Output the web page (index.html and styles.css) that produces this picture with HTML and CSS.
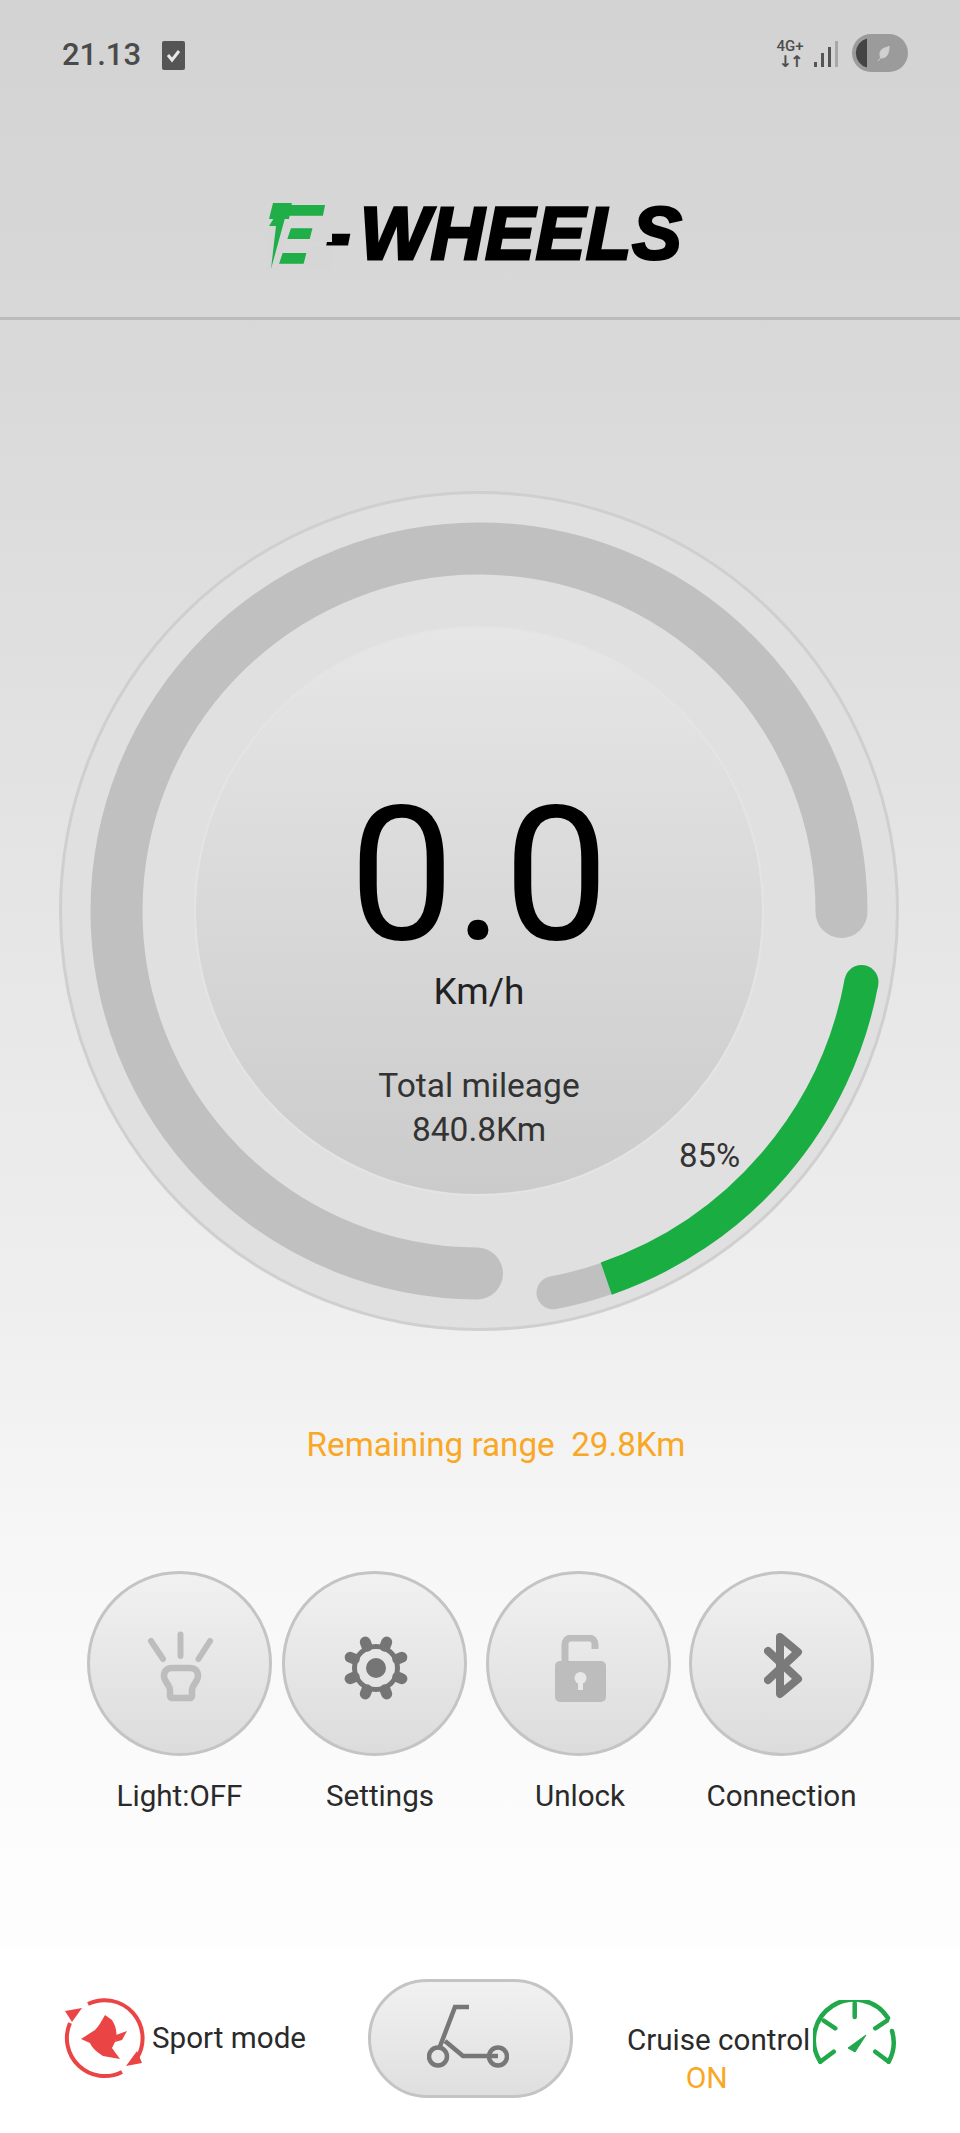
FILE: index.html
```html
<!DOCTYPE html>
<html lang="en">
<head>
<meta charset="utf-8">
<title>E-Wheels</title>
<link rel="stylesheet" href="styles.css">
</head>
<body>
<div class="app">
  <header class="top">
    <div class="status">
      <div class="status-left">
        <span class="clock">21.13</span>
        <svg class="check" viewBox="0 0 23 29"><rect width="23" height="29" rx="2" fill="#555"/><path d="M6 14l4 5 7-9" fill="none" stroke="#e8e8e8" stroke-width="3"/></svg>
      </div>
      <div class="status-right">
        <div class="net"><span class="net-type">4G+</span><span class="net-arrows">↓↑</span></div>
        <svg class="signal" viewBox="0 0 26 26"><rect x="0" y="21" width="3" height="5" fill="#555"/><rect x="7" y="12" width="3" height="14" fill="#555"/><rect x="14" y="6" width="3" height="20" fill="#555"/><rect x="21" y="0" width="3" height="26" fill="#a8a8a8"/></svg>
        <svg class="battery" viewBox="0 0 56 38"><rect x="0" y="0" width="56" height="38" rx="19" fill="#9b9b9b"/><path d="M15 4.500V33.500A15 15 0 0 1 15 4.500Z" fill="#444"/><path d="M36 13c-5 1-8 3-8 7 0 1 0 3 1 4 3 0 6-1 7-5 1-2 1-4 1-7zM26 27l5-6" fill="#d0d0d0" stroke="#d0d0d0"/></svg>
      </div>
    </div>
    <div class="logo">
      <span class="logo-mark">E<svg class="logo-cut" viewBox="0 0 70 72"><path d="M0 19H28L11 70H0ZM42 47H66V70H36ZM47 26H66V42H43Z" fill="#d6d6d6"/><path d="M7 3H26L21 19H3Z" fill="#1fae48"/><path d="M8 18H19L5 69 10 26H3Z" fill="#1fae48"/></svg></span>
      <span class="logo-dash">-</span>
      <span class="logo-word">WHEELS</span>
    </div>
  </header>

  <main class="main">
    <section class="dial">
      <svg class="dial-arcs" viewBox="0 0 840 840">
        <path d="M782.500 421A362.500 362.500 0 1 0 418 782.500" fill="none" stroke="#c0c0c0" stroke-width="52" stroke-linecap="round"/>
        <path d="M494 801.800A389 389 0 0 0 547.300 787.600" fill="none" stroke="#c0c0c0" stroke-width="33" stroke-linecap="round"/>
        <path d="M547.300 787.600A389 389 0 0 0 802.500 490.900" fill="none" stroke="#19ad42" stroke-width="34"/>
        <circle cx="802.500" cy="490.900" r="17" fill="#19ad42"/>
      </svg>
      <div class="disc">
        <div class="speed">0.0</div>
        <div class="unit">Km/h</div>
        <div class="mileage">Total mileage<br>840.8Km</div>
      </div>
      <div class="percent">85%</div>
    </section>

    <p class="range">Remaining range&nbsp; 29.8Km</p>

    <section class="controls">
      <div class="control">
        <button class="round">
          <svg class="ic-light" viewBox="0 0 70 74"><g fill="none" stroke="#bdbdbd" stroke-width="6" stroke-linecap="round"><path d="M5 10l12 18M34.500 3.500V25M64 10L52.500 28"/><path d="M26 37h18c5 0 8 3 8 8 0 6-6 9-6 14v6a2 2 0 0 1-2 2H26a2 2 0 0 1-2-2v-6c0-5-6-8-6-14 0-5 3-8 8-8z" stroke-width="6.500"/></g></svg>
        </button>
        <span class="label">Light:OFF</span>
      </div>
      <div class="control control-settings">
        <button class="round">
          <svg class="ic-gear" viewBox="-36 -36 72 72"><circle r="21.500" fill="none" stroke="#757575" stroke-width="5"/><circle r="10" fill="#757575"/><g stroke="#757575" stroke-width="11" stroke-linecap="round"><path d="M23.500 0H28" transform="rotate(22.500)"/><path d="M23.500 0H28" transform="rotate(67.500)"/><path d="M23.500 0H28" transform="rotate(112.500)"/><path d="M23.500 0H28" transform="rotate(157.500)"/><path d="M23.500 0H28" transform="rotate(202.500)"/><path d="M23.500 0H28" transform="rotate(247.500)"/><path d="M23.500 0H28" transform="rotate(292.500)"/><path d="M23.500 0H28" transform="rotate(337.500)"/></g></svg>
        </button>
        <span class="label">Settings</span>
      </div>
      <div class="control control-unlock">
        <button class="round">
          <svg class="ic-lock" viewBox="0 0 51 67"><path d="M10 28V9a6 6 0 0 1 6-6h18a6 6 0 0 1 6 6v5" fill="none" stroke="#bdbdbd" stroke-width="7"/><rect y="26" width="51" height="41" rx="5" fill="#bdbdbd"/><circle cx="25.500" cy="43" r="6" fill="#e8e8e8"/><rect x="23" y="44" width="5" height="11" fill="#e8e8e8"/></svg>
        </button>
        <span class="label">Unlock</span>
      </div>
      <div class="control control-conn">
        <button class="round">
          <svg class="ic-bt" viewBox="0 0 39 67"><path d="M4 19L34 47 16 62V5L34 20 4 48" fill="none" stroke="#7a7a7a" stroke-width="8" stroke-linejoin="round" stroke-linecap="round"/></svg>
        </button>
        <span class="label">Connection</span>
      </div>
    </section>
  </main>

  <footer class="bottom">
    <div class="sport">
      <svg class="ic-sport" viewBox="0 0 80 80"><g fill="none" stroke="#ea4444" stroke-width="4"><path d="M23 6A38 38 0 0 1 72 60"/><path d="M57 74A38 38 0 0 1 5 25"/></g><g fill="#ea4444"><path d="M61 68L77 65 72 53Z"/><path d="M0 13L17 10 7 24Z"/><path d="M16 41L30 32C34 28 37 22 40 17L47 22C51 28 53 36 50 44L47 50 55 61 38 58C32 54 27 50 25 45Z"/><path d="M51 37L62 33 57 42 50 44Z"/></g></svg>
      <span class="foot-text">Sport mode</span>
    </div>
    <button class="pill">
      <svg class="ic-scooter" viewBox="0 0 82 64"><g fill="none" stroke="#777" stroke-width="4.500"><path d="M42 3H28L12 45"/><path d="M18 37L36 52H71"/><circle cx="11" cy="52.500" r="9"/><circle cx="71" cy="52.500" r="9"/></g></svg>
    </button>
    <div class="cruise">
      <div class="cruise-text"><span class="foot-text">Cruise control</span><span class="cruise-on">ON</span></div>
      <svg class="ic-gauge" viewBox="0 0 84 64"><g fill="none" stroke="#20a84a" stroke-width="4.500" stroke-linecap="round"><path d="M7.300 61.700A40 40 0 0 1 75 18"/><path d="M79 31A40 40 0 0 1 75.700 61.700"/><path d="M41.700 3V17M10.700 20.700L22.300 28.300M74 20.700L62.300 28.300M7.300 61.700L20.700 51.700M75.700 61.700L62.300 51.700"/></g><path d="M53 35L42 52 35 48Z" fill="#20a84a" stroke="#20a84a" stroke-linejoin="round"/></svg>
    </div>
  </footer>
</div>
</body>
</html>
```
FILE: styles.css
```css
* { box-sizing: border-box; }
html, body { margin: 0; padding: 0; }
body {
  font-family: Roboto, "Liberation Sans", sans-serif;
  background: #fff;
  color: #222;
}
.app {
  width: 960px;
  height: 2133px;
  display: flex;
  flex-direction: column;
  background: linear-gradient(to bottom, #d3d3d3 0, #d8d8d8 320px, #efefef 1330px, #f7f7f7 1560px, #fdfdfd 1900px, #fff 2133px);
}

/* header */
.top {
  height: 320px;
  border-bottom: 3px solid #bcbcbc;
  display: flex;
  flex-direction: column;
}
.status {
  height: 202px;
  padding: 34px 52px 0 62px;
  display: flex;
  justify-content: space-between;
  align-items: flex-start;
}
.status-left { display: flex; align-items: center; gap: 21px; height: 36px; margin-top: 3px; }
.clock { font-size: 31px; font-weight: 500; color: #4a4a4a; line-height: 36px; }
.check { width: 23px; height: 29px; }
.status-right { display: flex; align-items: flex-start; }
.net { width: 30px; margin: 6px -2px 0 0; display: flex; flex-direction: column; align-items: center; color: #4d4d4d; font-weight: 500; }
.net-type { font-size: 15px; line-height: 12px; }
.net-arrows { font-size: 16px; line-height: 16px; margin-top: 2px; font-family: "DejaVu Sans", sans-serif; font-weight: 700; letter-spacing: -2px; }
.signal { width: 26px; height: 26px; margin: 7px 12px 0 11px; }
.battery { width: 56px; height: 38px; }

.logo { display: flex; align-items: flex-start; padding-left: 266px; font-family: "Liberation Sans", sans-serif; font-weight: 700; font-style: italic; }
.logo-mark { position: relative; color: #1fae48; font-size: 84px; line-height: 64px; width: 60px; -webkit-text-stroke: 1.5px #1fae48; }
.logo-cut { position: absolute; left: 0; top: -2px; width: 70px; height: 72px; overflow: visible; }
.logo-dash { color: #000; font-size: 74px; line-height: 64px; width: 34px; -webkit-text-stroke: 3px #000; }
.logo-word { color: #000; font-size: 74px; letter-spacing: 1px; line-height: 64px; -webkit-text-stroke: 3px #000; }

/* dial */
.main { flex: 1; display: flex; flex-direction: column; }
.dial {
  position: relative;
  width: 840px;
  height: 840px;
  margin: 171px 0 0 59px;
  border-radius: 50%;
  border: 3px solid #cfcfcf;
  background: #e0e0e0;
  display: flex;
  align-items: center;
  justify-content: center;
}
.dial-arcs { position: absolute; left: -3px; top: -3px; width: 840px; height: 840px; }
.disc {
  position: relative;
  width: 570px;
  height: 570px;
  border-radius: 50%;
  border: 2px solid #e4e4e4;
  background: linear-gradient(to bottom, #e6e6e6, #cbcbcb);
  display: flex;
  flex-direction: column;
  align-items: center;
}
.speed { margin-top: 173px; font-size: 187px; line-height: 150px; color: #000; }
.unit { margin-top: 19px; font-size: 37px; line-height: 44px; color: #222; }
.mileage { margin-top: 50px; font-size: 33.500px; line-height: 44px; color: #333; text-align: center; }
.percent { position: absolute; left: 617px; top: 644px; font-size: 33px; line-height: 36px; color: #333; }

.range { margin: 94px 0 0; padding-left: 32px; text-align: center; font-size: 33.200px; line-height: 40px; color: #f9a825; }

/* controls */
.controls { margin-top: 106px; padding-left: 87px; display: flex; }
.control { width: 185px; display: flex; flex-direction: column; align-items: center; }
.control-settings { margin-left: 10px; }
.control-unlock { margin-left: 19px; }
.control-conn { margin-left: 18px; }
.round {
  width: 185px;
  height: 185px;
  padding: 9px 0 0 3px;
  border-radius: 50%;
  border: 3px solid #c4c4c4;
  background: linear-gradient(to bottom, #f1f1f1, #dcdcdc);
  display: flex;
  align-items: center;
  justify-content: center;
}
.label { margin-top: 22px; font-size: 29.600px; line-height: 36px; color: #2a2a2a; }
.control-settings .label { padding-left: 11px; }
.control-unlock .label { padding-left: 3px; }

.ic-light { width: 70px; height: 74px; }
.ic-gear { width: 72px; height: 72px; }
.ic-lock { width: 51px; height: 67px; }
.ic-bt { width: 39px; height: 67px; margin-top: -5px; }

/* bottom */
.bottom {
  height: 185px;
  background: #fff;
  display: flex;
  align-items: flex-start;
}
.sport { display: flex; align-items: center; margin: 50px 0 0 65px; width: 303px; }
.ic-sport { width: 80px; height: 80px; overflow: visible; }
.foot-text { font-size: 29.600px; line-height: 36px; color: #2a2a2a; }
.sport .foot-text { margin-left: 7px; }
.pill {
  width: 205px;
  height: 119px;
  margin-top: 31px;
  padding: 0 6px 6px 0;
  border-radius: 60px;
  border: 3px solid #c4c4c4;
  background: linear-gradient(to bottom, #f1f1f1, #dfdfdf);
  display: flex;
  align-items: center;
  justify-content: center;
}
.ic-scooter { width: 82px; height: 64px; }
.cruise { display: flex; align-items: flex-start; margin: 52px 0 0 54px; }
.cruise-text { display: flex; flex-direction: column; align-items: center; margin-top: 22px; }
.cruise-on { margin: 2px 24px 0 0; font-size: 30px; line-height: 36px; color: #f9a825; }
.ic-gauge { width: 84px; height: 64px; margin-left: 3px; }
```
